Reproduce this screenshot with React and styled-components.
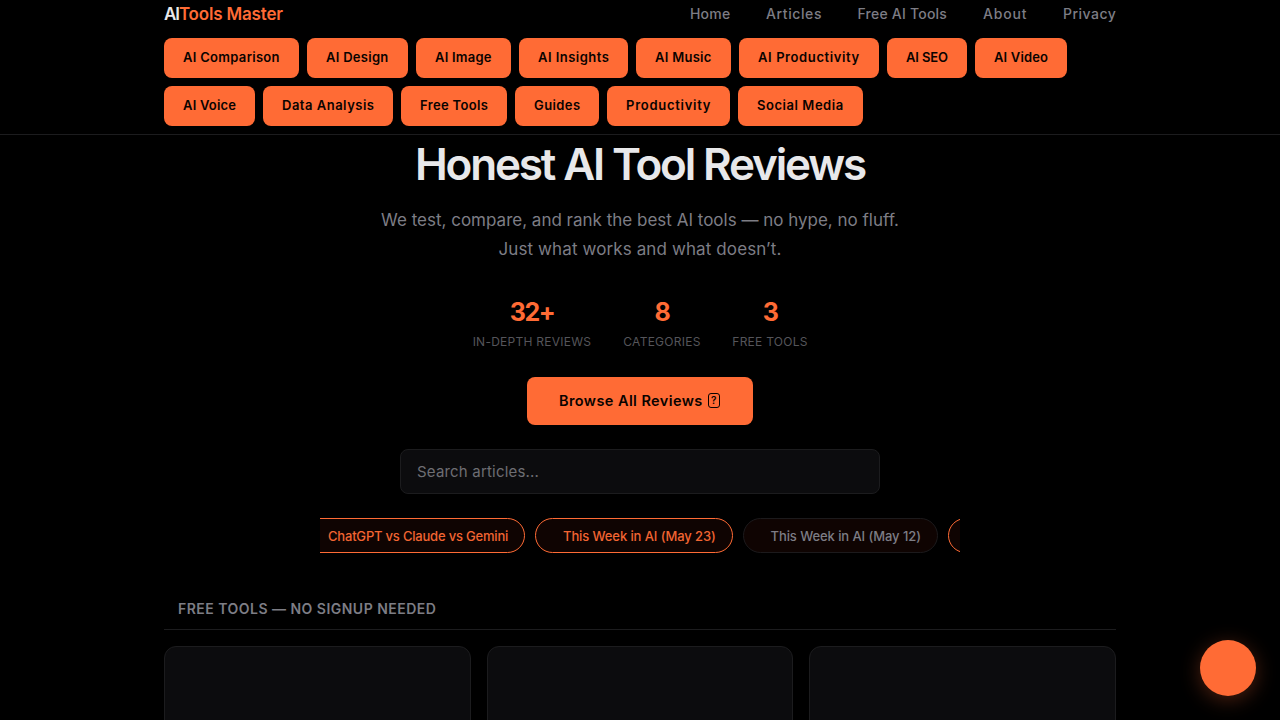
import styled, { createGlobalStyle } from "styled-components";

const GlobalStyle = createGlobalStyle`
    * {
        box-sizing: border-box;
    }

    body {
        margin: 0;
        height: 720px;
        overflow: hidden;
        background-color: #000;
        color: #e8e8ea;
        font-family: "Inter", "Liberation Sans", sans-serif;
    }
`;

const Page = styled.div`
    height: 720px;
    overflow: hidden;
`;

const Header = styled.header`
    height: 135px;
    border-bottom: 1px solid #1c1c1e;
`;

const Wrapper = styled.div`
    width: 952px;
    margin: 0 auto;
`;

const TopBar = styled.div`
    height: 28px;
    margin-bottom: 10px;
    display: flex;
    align-items: center;
    justify-content: space-between;
`;

const Logo = styled.div`
    font-size: 17px;
    font-weight: 600;
    line-height: 28px;
    white-space: nowrap;
    letter-spacing: -0.17px;
    color: #ff6b35;
`;

const LogoAccent = styled.span`
    color: #e8e8ea;
    letter-spacing: -1.1px;
`;

const Nav = styled.nav`
    display: flex;
    gap: 36px;
`;

const NavLink = styled.a`
    width: ${(props) => props.$width}px;
    padding-bottom: 2px;
    font-size: 14px;
    font-weight: 500;
    letter-spacing: ${(props) => props.$spacing}px;
    white-space: nowrap;
    color: #7d7d85;
`;

const Tags = styled.div`
    display: flex;
    flex-wrap: wrap;
    gap: 8px;
`;

const Tag = styled.a`
    width: ${(props) => props.$width}px;
    height: 40px;
    padding-left: 19px;
    border-radius: 8px;
    background-color: #ff6b35;
    color: #0a0300;
    font-size: 13px;
    font-weight: 600;
    line-height: 39px;
    letter-spacing: ${(props) => props.$spacing}px;
    white-space: nowrap;
`;

const Hero = styled.section`
    display: flex;
    flex-direction: column;
    align-items: center;
`;

const Title = styled.h1`
    margin: 4px 0 17px;
    font-size: 44px;
    font-weight: 600;
    line-height: 50px;
    letter-spacing: -2.15px;
    white-space: nowrap;
`;

const Description = styled.p`
    margin: 0;
    font-size: 17px;
    font-weight: 400;
    line-height: 29px;
    letter-spacing: ${(props) => props.$spacing}px;
    white-space: nowrap;
    color: #7d7d85;
`;

const Stats = styled.div`
    margin-top: 33px;
    display: flex;
    gap: 32px;
`;

const Stat = styled.div`
    width: ${(props) => props.$width}px;
    display: flex;
    flex-direction: column;
    align-items: center;
`;

const StatNumber = styled.div`
    font-size: 25px;
    font-weight: 700;
    line-height: 30px;
    letter-spacing: -1.4px;
    color: #ff6b35;
`;

const StatLabel = styled.div`
    margin-top: 6px;
    font-size: 12px;
    font-weight: 400;
    line-height: 18px;
    letter-spacing: 0.26px;
    text-transform: uppercase;
    white-space: nowrap;
    color: #55555a;
`;

const Button = styled.button`
    width: 226px;
    height: 48px;
    margin-top: 26px;
    padding: 0 0 1px 32px;
    display: flex;
    align-items: center;
    gap: 5px;
    border: none;
    border-radius: 8px;
    background-color: #ff6b35;
    color: #0a0300;
    font-family: inherit;
    font-size: 14.5px;
    font-weight: 600;
    letter-spacing: 0.42px;
    white-space: nowrap;
`;

const Glyph = styled.span`
    width: 12px;
    height: 15px;
    border: 1.5px solid #0a0300;
    border-radius: 3px;
    font-size: 10px;
    font-weight: 600;
    line-height: 13px;
    letter-spacing: 0;
    text-align: center;
`;

const Search = styled.input`
    width: 480px;
    height: 45px;
    margin-top: 24px;
    padding: 0 16px;
    border: 1px solid #1c1c1e;
    border-radius: 8px;
    background-color: #0c0c0e;
    font-family: inherit;
    font-size: 15px;
    font-weight: 400;
    letter-spacing: 0.19px;

    &::placeholder {
        color: #6e6e73;
    }
`;

const Ticker = styled.div`
    width: 640px;
    margin-top: 24px;
    overflow: hidden;
`;

const TickerTrack = styled.div`
    width: max-content;
    margin-left: -20px;
    display: flex;
    gap: 10px;
`;

const Pill = styled.a`
    width: ${(props) => props.$width}px;
    height: 35px;
    padding-left: ${(props) => (props.$muted ? 26.5 : 27)}px;
    border: 1px solid ${(props) => (props.$muted ? "#1c1a1c" : "#ff6b35")};
    border-radius: 18px;
    background-color: #0f0402;
    color: ${(props) => (props.$muted ? "#7d7d85" : "#f26532")};
    font-size: 13px;
    font-weight: 500;
    line-height: 34px;
    letter-spacing: ${(props) => props.$spacing}px;
    white-space: nowrap;
`;

const SectionTitle = styled.h2`
    height: 41px;
    margin: 36px 0 16px;
    padding-left: 14px;
    border-bottom: 1px solid #1c1c1e;
    font-size: 14px;
    font-weight: 600;
    line-height: 40px;
    letter-spacing: 0.48px;
    text-transform: uppercase;
    color: #7d7d85;
`;

const Cards = styled.div`
    display: grid;
    grid-template-columns: repeat(3, 1fr);
    gap: 16px;
`;

const Card = styled.div`
    height: 180px;
    border: 1px solid #1c1c1e;
    border-radius: 12px;
    background-color: #0c0c0e;
`;

const FloatingButton = styled.button`
    position: fixed;
    right: 24px;
    bottom: 24px;
    width: 56px;
    height: 56px;
    border: none;
    border-radius: 50%;
    background-color: #ff6b35;
    box-shadow: 0 4px 20px rgba(255, 107, 53, 0.3);
`;

const links = [
  { name: "Home", width: 40, spacing: 0.2 },
  { name: "Articles", width: 55.5, spacing: 0.6 },
  { name: "Free AI Tools", width: 89.5, spacing: 0.22 },
  { name: "About", width: 44, spacing: 0.8 },
  { name: "Privacy", width: 53, spacing: 0.48 },
];

const tags = [
  { name: "AI Comparison", width: 135, spacing: 0.3 },
  { name: "AI Design", width: 101, spacing: 0.28 },
  { name: "AI Image", width: 95, spacing: 0.22 },
  { name: "AI Insights", width: 109, spacing: 0.47 },
  { name: "AI Music", width: 95, spacing: 0.28 },
  { name: "AI Productivity", width: 140, spacing: 0.6 },
  { name: "AI SEO", width: 80, spacing: -0.12 },
  { name: "AI Video", width: 92, spacing: 0.16 },
  { name: "AI Voice", width: 91, spacing: 0.2 },
  { name: "Data Analysis", width: 130, spacing: 0.5 },
  { name: "Free Tools", width: 106, spacing: 0.35 },
  { name: "Guides", width: 84, spacing: 0.4 },
  { name: "Productivity", width: 123, spacing: 0.74 },
  { name: "Social Media", width: 125, spacing: 0.55 },
];

const stats = [
  { value: "32+", label: "In-Depth Reviews", width: 119 },
  { value: "8", label: "Categories", width: 77 },
  { value: "3", label: "Free Tools", width: 75 },
];

const App = () => {
  return (
    <Page>
        <GlobalStyle />
        <Header>
            <Wrapper>
                <TopBar>
                    <Logo><LogoAccent>AI</LogoAccent>Tools Master</Logo>
                    <Nav>
                        {links.map((link) => (
                            <NavLink key={link.name} $width={link.width} $spacing={link.spacing}>{link.name}</NavLink>
                        ))}
                    </Nav>
                </TopBar>
                <Tags>
                    {tags.map((tag) => (
                        <Tag key={tag.name} $width={tag.width} $spacing={tag.spacing}>{tag.name}</Tag>
                    ))}
                </Tags>
            </Wrapper>
        </Header>
        <Hero>
            <Title>Honest AI Tool Reviews</Title>
            <Description $spacing={0}>We test, compare, and rank the best AI tools — no hype, no fluff.</Description>
            <Description $spacing={0.11}>Just what works and what doesn’t.</Description>
            <Stats>
                {stats.map((stat) => (
                    <Stat key={stat.label} $width={stat.width}>
                        <StatNumber>{stat.value}</StatNumber>
                        <StatLabel>{stat.label}</StatLabel>
                    </Stat>
                ))}
            </Stats>
            <Button>Browse All Reviews <Glyph>?</Glyph></Button>
            <Search placeholder="Search articles..." />
            <Ticker>
                <TickerTrack>
                    <Pill $width={225} $spacing={-0.2}>ChatGPT vs Claude vs Gemini</Pill>
                    <Pill $width={198} $spacing={-0.1}>This Week in AI (May 23)</Pill>
                    <Pill $width={195} $spacing={-0.08} $muted>This Week in AI (May 12)</Pill>
                    <Pill $width={198} $spacing={0} />
                </TickerTrack>
            </Ticker>
        </Hero>
        <Wrapper>
            <SectionTitle>Free Tools — No Signup Needed</SectionTitle>
            <Cards>
                <Card />
                <Card />
                <Card />
            </Cards>
        </Wrapper>
        <FloatingButton />
    </Page>
  )
}

export default App
